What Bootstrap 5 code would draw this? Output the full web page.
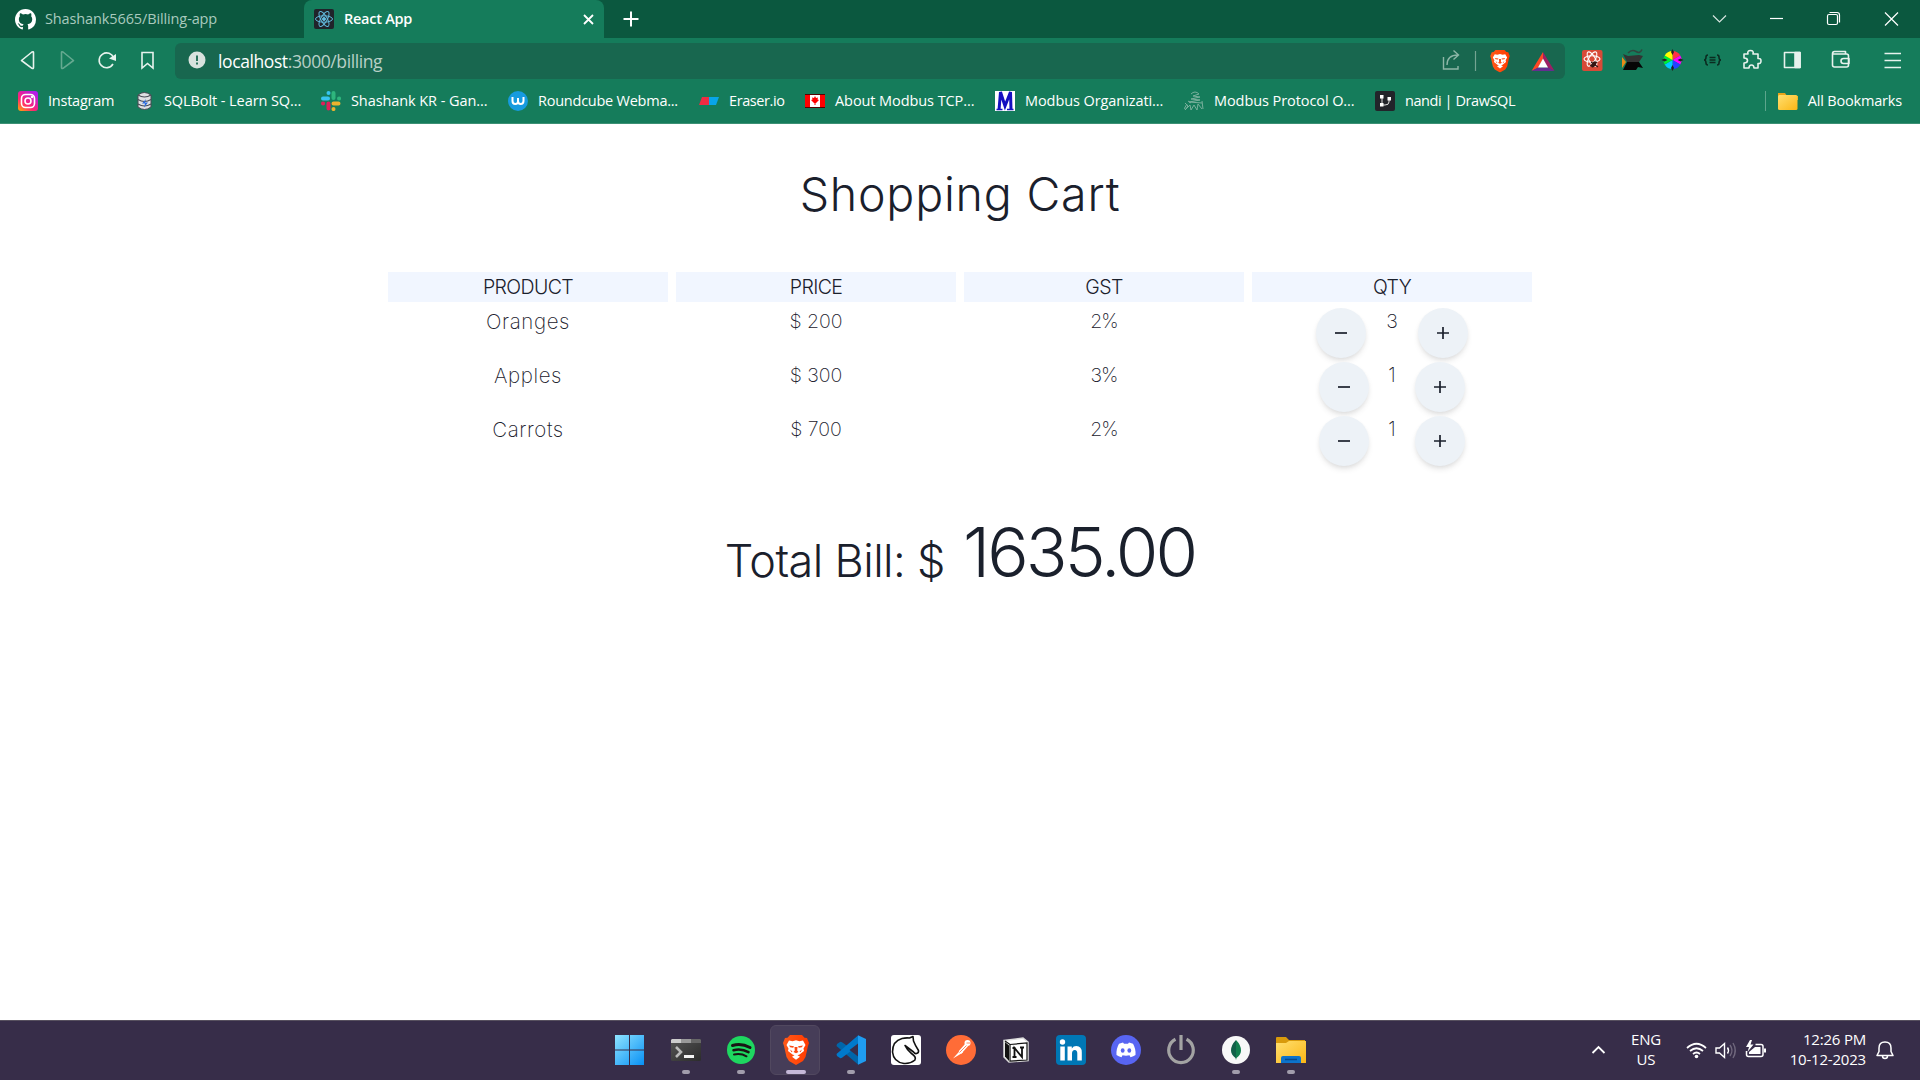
<!DOCTYPE html>
<html lang="en"><head><meta charset="utf-8"><title>React App</title>
<link href="https://cdn.jsdelivr.net/npm/bootstrap@5.3.0/dist/css/bootstrap.min.css" rel="stylesheet">
<style>
html,body{height:100%;overflow:hidden}
body{font-family:"Open Sans","Noto Sans",sans-serif;color:#1a202c;background:#fff}
svg{display:block;flex:none}
.screen{width:1920px;height:1080px}
.tabstrip{height:38px;background:#0b583f;color:#fff}
.tab-idle{width:304px;padding-left:15px;color:#a9cabe;gap:9px;letter-spacing:-.12px}
.tab-live{width:300px;background:#157c5b;border-radius:8px 8px 0 0;padding:0 10px}
.tab-name{margin-left:10px;letter-spacing:-.25px}
.t15{font-size:14.5px;line-height:20px;white-space:nowrap}
.toolbar{height:48px;background:#157c5b}
.omni{width:1390px;height:36px;background:#18674f;border-radius:6px;margin-top:5px;padding-left:13px}
.addr{font-size:17.5px;line-height:20px;margin:0 0 1px 12px;color:#b9d0c7;letter-spacing:-.4px}
.marks{height:38px;background:#157c5b;border-bottom:1px solid #3c9074;color:#fff;padding:0 18px 8px;letter-spacing:-.08px}
.marks .snug{letter-spacing:-.42px}
.marks .snug-some{letter-spacing:-.24px}
.bm{gap:10px}
.page-area{font-family:Inter,Lato,sans-serif;font-weight:300}
.title{font-size:46.5px;line-height:54px;font-weight:300;margin:43px 0 51px;letter-spacing:.8px}
.cart{width:1144px;display:grid;grid-template-columns:repeat(4,280px);gap:0 8px}
.hd{height:30px;line-height:30px;background:#f1f6ff;font-size:19.5px;font-weight:350;letter-spacing:-.6px}
.cell{height:54px;padding-top:6px;font-size:19.5px;line-height:27px;font-weight:200}
.nm{font-size:20.5px;letter-spacing:.6px}
.pct{letter-spacing:-1px}
.rnd{width:50px;height:50px;border-radius:50%;background:#edf2f7;box-shadow:0 4px 6px -1px rgba(0,0,0,.1),0 2px 4px -1px rgba(0,0,0,.06);border:0;padding:0 0 1px;display:flex;align-items:center;justify-content:center}
.qn{width:52px}
.qn1{width:46px}
.total{margin-top:43px;height:90px;line-height:90px}
.lbl{font-size:45px;letter-spacing:-.6px}
.sum{font-size:69px;letter-spacing:-2.9px;margin-left:18px}
.taskbar{height:60px;background:#372d49;border-top:1px solid #57505f;color:#fff}
.apps{padding-left:602px}
.app{width:55px;height:58px;position:relative;display:flex;align-items:center;justify-content:center}
.app-start{width:56px;padding-right:1px}
.app.run::after{content:"";position:absolute;bottom:5px;width:8px;height:4px;border-radius:2px;background:#a29dac}
.app.act::after{width:20px;background:#c5b8d8}
.app.act::before{content:"";position:absolute;left:2px;top:4px;width:50px;height:50px;border-radius:6px;background:#463d58;border:1px solid #51485f}
.app svg{position:relative}
.tray{font-size:15px;line-height:20px;padding:0 24px 3px 0}
.lang{width:60px;letter-spacing:-.2px}
.clock{width:80px;letter-spacing:-.2px;white-space:nowrap}
</style></head><body>
<svg width="0" height="0" class="position-absolute"><defs>
<linearGradient id="ig" x1="0" y1="1" x2=".8" y2="0"><stop offset="0" stop-color="#ffb000"/><stop offset=".4" stop-color="#ff2670"/><stop offset="1" stop-color="#b01cf0"/></linearGradient>
<linearGradient id="wn" x1="0" y1="0" x2="29" y2="30" gradientUnits="userSpaceOnUse"><stop offset="0" stop-color="#8fe4ff"/><stop offset="1" stop-color="#0890f4"/></linearGradient>
<linearGradient id="fo" x1="0" y1="0" x2="1" y2="1"><stop offset="0" stop-color="#ffdf70"/><stop offset="1" stop-color="#fbb615"/></linearGradient>
<linearGradient id="br" x1="0" y1="0" x2="1" y2="0"><stop offset="0" stop-color="#ff5a1a"/><stop offset="1" stop-color="#ff3a00"/></linearGradient>
<linearGradient id="tm" x1="0" y1="0" x2="1" y2="1"><stop offset="0" stop-color="#555"/><stop offset="1" stop-color="#2c2c2c"/></linearGradient>
<symbol id="brave" viewBox="0 0 26 30"><g stroke="none"><path fill="url(#br)" d="M7 0h12l2.500 2.800L24 3l2 5-1 3-2.500 11-2.500 4-7 4-7-4-2.500-4L1 11 0 8l2-5 2.500-.2z"/><path fill="#fff" d="M6 5.500l3.500.7 3.500-1 3.500 1 3.500-.7L22.500 10l-2 3.500.5 2.500-4.500 3.500-2 .7 2.500 1.600-4 3-4-3 2.500-1.600-2-.7L5 16l.5-2.500-2-3.500z"/><g fill="#fb4a14"><path d="M6 10.500l5 .8-.8 1.500-3-.6zM20 10.500l-5 .8.800 1.500 3-.6zM11.500 12h3l-.3 3.500 1.300 1.500L13 18.200 10.500 17l1.300-1.500zM7 14.500l2.500 2-1 .8zM19 14.500l-2.500 2 1 .8z"/></g></g></symbol>
</defs></svg>
<div class="screen d-flex flex-column">
<header>
<div class="tabstrip d-flex align-items-stretch">
 <div class="tab-idle d-flex align-items-center">
  <svg width="21" height="21" viewBox="0 0 16 16" fill="#fff"><path d="M8 0C3.58 0 0 3.58 0 8c0 3.54 2.29 6.53 5.47 7.59.4.07.55-.17.55-.38v-1.49c-2.01.37-2.53-.49-2.69-.94-.09-.23-.48-.94-.82-1.13-.28-.15-.68-.52-.01-.53.63-.01 1.08.58 1.23.82.72 1.21 1.87.87 2.33.66.07-.52.28-.87.51-1.07-1.78-.2-3.64-.89-3.64-3.95 0-.87.31-1.59.82-2.15-.08-.2-.36-1.02.08-2.12 0 0 .67-.21 2.2.82a7.6 7.6 0 0 1 4 0c1.53-1.04 2.2-.82 2.2-.82.44 1.1.16 1.92.08 2.12.51.56.82 1.27.82 2.15 0 3.07-1.87 3.75-3.65 3.95.29.25.54.73.54 1.48v2.2c0 .21.15.46.55.38A8 8 0 0 0 16 8c0-4.42-3.58-8-8-8z"/></svg>
  <span class="t15">Shashank5665/Billing-app</span></div>
 <div class="tab-live d-flex align-items-center">
  <svg width="20" height="20" viewBox="0 0 20 20" fill="none" stroke="#61b9dc"><rect width="20" height="20" rx="2" fill="#20232a" stroke="none"/><ellipse cx="10" cy="10" rx="8.5" ry="3.2"/><ellipse cx="10" cy="10" rx="8.5" ry="3.2" transform="rotate(60 10 10)"/><ellipse cx="10" cy="10" rx="8.5" ry="3.2" transform="rotate(120 10 10)"/><circle cx="10" cy="10" r="1.5" fill="#61b9dc"/></svg>
  <span class="t15 fw-semibold tab-name">React App</span>
  <svg class="ms-auto" width="11" height="11" viewBox="0 0 11 11" stroke="#fff" stroke-width="1.8"><path d="M1 1l9 9M10 1l-9 9"/></svg></div>
 <svg width="54" height="38" stroke="#fff" stroke-width="2"><path d="M19.5 19h15M27 11.500v15"/></svg>
 <svg class="ms-auto" width="220" height="38" fill="none" stroke="#d7e5df" stroke-width="1.2"><path d="M13 15.500l6.500 6.500 6.500-6.500"/><path stroke="#fff" d="M70 18.500h13"/><path stroke="#fff" d="M185 12.500l13 13M198 12.500l-13 13"/><g stroke="#fff"><rect x="127.500" y="14.500" width="10" height="10" rx="1.500"/><path d="M129.500 12.500h7.500q2.500 0 2.500 2.500v7.500"/></g></svg>
</div>
<div class="toolbar d-flex">
 <svg width="175" height="48" fill="none" stroke="#e7f2ed" stroke-width="1.6" stroke-linejoin="round"><path d="M33.500 14.500v15q0 1.500-1.500.8L21.500 22.500l10.500-8.500q1.500-.8 1.500.5z"/><path stroke="#65a990" d="M61.500 14.500v15q0 1.500 1.500.8l10.500-7.800-10.500-8.500q-1.500-.8-1.500.5z"/><path d="M113.600 20a7.400 7.400 0 1 0-.6 6"/><path fill="#e7f2ed" stroke="none" d="M109 20.500l7-4.500v7z"/><path stroke-linejoin="miter" d="M142 14.500h11v15.500l-5.500-4.500-5.500 4.500z"/></svg>
 <div class="omni d-flex align-items-center">
  <svg width="18" height="20"><circle cx="9" cy="9" r="8.500" fill="#d8e2de"/><path d="M9 4.500v5.500M9 11.500v2" stroke="#18674f" stroke-width="1.800"/></svg>
  <span class="addr"><span class="text-white">localhost</span>:3000/billing</span>
  <svg class="ms-auto" width="135" height="36" fill="none" stroke="#8db6a7" stroke-width="1.400"><path d="M13.500 14v12h14.500v-3M17 22q0-10 11-10M23.500 7.500l5 4.500-5 4.500"/><path stroke="#74a492" stroke-width="1.200" d="M45.500 8v20"/><use href="#brave" x="60" y="7" width="20" height="22.500"/><g stroke="none"><path fill="#ff4724" d="M113 9L101.500 28l6.500-3 5-9z"/><path fill="#9e1f63" d="M113 9l11.500 19-6.500-3-5-9z"/><path fill="#662d91" d="M101.500 28h23l-6.500-3.500h-10z"/><path fill="#fff" d="M113 15.500l5 9h-10z"/></g></svg>
 </div>
 <svg width="355" height="48" viewBox="0 1 355 48" fill="none">
  <g transform="translate(17 13)"><rect width="20.500" height="21" rx="2" fill="#d84a38"/><g stroke="#fff" stroke-width="1.100"><ellipse cx="10" cy="9" rx="8" ry="3.200"/><ellipse cx="10" cy="9" rx="8" ry="3.200" transform="rotate(60 10 9)"/><ellipse cx="10" cy="9" rx="8" ry="3.200" transform="rotate(120 10 9)"/></g><path stroke="#321513" stroke-width="1.200" d="M9 12l7 5M8 16l7-4"/><ellipse cx="12" cy="14.500" rx="2" ry="3.500" fill="#321513" transform="rotate(35 12 14)"/></g>
  <g transform="translate(57 12)"><path d="M6 4q4-4 8-1.500t6-2" stroke="#30463f" stroke-width="1.500"/><path fill="#333" d="M1 5l5 2 11-1 4 1-4 6H5z"/><path fill="#e98b18" d="M0 8l4 5-4 6z"/><path fill="#060606" d="M5 13h12l4 6-5-1-2 3H1z"/></g>
  <g transform="translate(107.500 23)"><path fill="#f34" d="M0 0V-9A9 9 0 0 1 7.800-4.500z"/><path fill="#f0f" d="M0 0L7.800-4.500A9 9 0 0 1 7.800 4.500z"/><path fill="#24f" d="M0 0L7.800 4.500A9 9 0 0 1 0 9z"/><path fill="#0cf" d="M0 0V9A9 9 0 0 1-7.800 4.500z"/><path fill="#0e3" d="M0 0L-7.800 4.500A9 9 0 0 1-7.800-4.500z"/><path fill="#ff0" d="M0 0L-7.800-4.500A9 9 0 0 1 0-9z"/><g fill="#222"><path d="M0-5l-1.500-3L0-11l1.500 3zM0 5l-1.500 3L0 11l1.500-3zM-5 0l-3-1.500L-11 0l3 1.500zM5 0l3-1.500L11 0l-3 1.500z"/></g></g>
  <g transform="translate(147.500 23)" stroke="#0b2c21" stroke-width="1.600"><path d="M-4.500-5q-2 0-2 2 0 3-2 3 2 0 2 3 0 2 2 2M4.500-5q2 0 2 2 0 3 2 3-2 0-2 3 0 2-2 2M-3-2.500h6M-3 0h6M-3 2.500h6"/></g>
  <g stroke="#e7f2ed" stroke-width="1.600" stroke-linejoin="round"><path d="M179 17h4q-1-3.500 2.500-3.500T188 17h5v4.500q3-.5 3 2.500t-3 2.500V31h-4q0-3-2.500-3t-2.500 3h-5v-5q3.500 0 3.500-2.500T179 21z"/><rect x="219.500" y="15.500" width="15.500" height="15"/><path fill="#e7f2ed" d="M230 15.500h5v15h-5z"/><path d="M267.500 17v11q0 2 2 2h12q2 0 2-2v-9q0-2-2-2h-14q0-2.500 2-2.500h11v2.500M284 21.500h-5.500q-2.500 0-2.500 2.500t2.500 2.500h5.500z"/><path stroke-width="1.300" d="M319.500 16.500H336M319.500 23.500H336M319.500 30.500H336"/></g>
 </svg>
</div>
<nav class="marks d-flex align-items-center t15">
 <div class="bm d-flex align-items-center" style="width:116px"><svg width="20" height="20" fill="none" stroke="#fff" stroke-width="1.600"><rect width="20" height="20" rx="3" fill="url(#ig)" stroke="none"/><rect x="3.500" y="3.500" width="13" height="13" rx="4"/><circle cx="10" cy="10" r="3"/><circle cx="14" cy="6" r=".5"/></svg><span class="snug-some">Instagram</span></div>
 <div class="bm d-flex align-items-center" style="width:187px"><svg width="20" height="20"><path fill="#dfe0e2" stroke="#484b55" d="M4 4q6-5 13 0v12q-6.500 5-13 0z"/><path fill="none" stroke="#484b55" stroke-width="1.100" d="M4 4q6.500 4 13 0M4 8.500q6.500 4 13 0M4 13q6.500 4 13 0"/><path fill="#276ae0" d="M12 8l-4 4.500h3l-1 4 4-5h-3z"/></svg><span>SQLBolt - Learn SQ...</span></div>
 <div class="bm d-flex align-items-center" style="width:187px"><svg width="20" height="20" stroke-width="4" stroke-linecap="round"><path stroke="#36c5f0" d="M2 7.500h5M7.500 2v.1"/><path stroke="#2eb67d" d="M12.500 2v5M18 7.500h.1"/><path stroke="#ecb22e" d="M12.500 12.500h5M12.500 18v.1"/><path stroke="#e01e5a" d="M7.500 12.500v5M2 12.500h.1"/></svg><span>Shashank KR - Gan...</span></div>
 <div class="bm d-flex align-items-center" style="width:191px"><svg width="20" height="20"><circle cx="10" cy="10" r="10" fill="#169bdf"/><path d="M4.500 6v4q0 3 2.800 3T10 10V7v3q0 3 2.700 3t2.800-3V6" fill="none" stroke="#fff" stroke-width="2"/></svg><span class="snug-some">Roundcube Webma...</span></div>
 <div class="bm d-flex align-items-center" style="width:106px"><svg width="20" height="20"><path fill="#ef2b43" d="M3 6h7v8H0z"/><path fill="#08a5e9" d="M10 6h10l-3 8h-7z"/></svg><span class="snug">Eraser.io</span></div>
 <div class="bm d-flex align-items-center" style="width:190px"><svg width="20" height="20"><rect y="3.500" width="20" height="13" fill="#fff" stroke="#500"/><path fill="#f00" d="M0 4h5v12H0zM15 4h5v12h-5zM10 5l1 2 2-.5-.5 2 1.500.5-3 3h-.5v2h-1v-2H9l-3-3 1.500-.5-.5-2L9 7z"/></svg><span>About Modbus TCP...</span></div>
 <div class="bm d-flex align-items-center" style="width:189px"><svg width="20" height="20"><path fill="#fff" d="M0 0h20v20H0z"/><path d="M1.500 18.500h6M12 18.500h6.500" stroke="#1410c0" stroke-width="1.500"/><path d="M4 19L5.500 1 10 15 15.500 1l.5 18" fill="none" stroke="#1410c0" stroke-width="3"/></svg><span>Modbus Organizati...</span></div>
 <div class="bm d-flex align-items-center" style="width:191px"><svg width="20" height="20" fill="none" stroke="#78b09c" stroke-width="1"><path d="M7 3q4-4 8 0l-6 2 7 1-9 2 9 1-11 2 13 1M1 12l3 3-3 4 5-5 1 5 3-5 3 5 1-6 4 5M4 10l3 2M18 10l1 8M0 18l3-5"/></svg><span>Modbus Protocol O...</span></div>
 <div class="bm d-flex align-items-center"><svg width="20" height="20"><rect width="20" height="20" rx="2" fill="#22242a"/><path d="M7 6v8h3M14 8v3q0 3-4 3" fill="none" stroke="#ddd"/><path fill="#fff" d="M5 4h3.500v3.500H5zM5 12h3.500v3.500H5zM12.500 6H16v3.500h-3.500z"/></svg><span class="snug">nandi | DrawSQL</span></div>
 <div class="d-flex align-items-center ms-auto"><svg width="43" height="20"><path d="M.5 0v20" stroke="#5da58c"/><path fill="#e9a419" d="M13 2h7l2 3h11v4H13z"/><rect x="13" y="4" width="19.500" height="15" rx="1.500" fill="url(#fo)"/></svg><span style="letter-spacing:-.18px">All Bookmarks</span></div>
</nav>
</header>
<main class="page-area flex-grow-1 d-flex flex-column align-items-center text-center">
 <h1 class="title">Shopping Cart</h1>
 <section class="cart">
  <div class="hd">PRODUCT</div><div class="hd">PRICE</div><div class="hd">GST</div><div class="hd">QTY</div>
  <div class="cell nm">Oranges</div><div class="cell">$ 200</div><div class="cell pct">2%</div>
  <div class="cell d-flex justify-content-center"><button class="rnd"><svg width="12" height="12" stroke="#1a202c" stroke-width="1.700"><path d="M0 6h12"/></svg></button><span class="qn">3</span><button class="rnd"><svg width="12" height="12" stroke="#1a202c" stroke-width="1.700"><path d="M0 6h12M6 0v12"/></svg></button></div>
  <div class="cell nm">Apples</div><div class="cell">$ 300</div><div class="cell pct">3%</div>
  <div class="cell d-flex justify-content-center"><button class="rnd"><svg width="12" height="12" stroke="#1a202c" stroke-width="1.700"><path d="M0 6h12"/></svg></button><span class="qn1">1</span><button class="rnd"><svg width="12" height="12" stroke="#1a202c" stroke-width="1.700"><path d="M0 6h12M6 0v12"/></svg></button></div>
  <div class="cell nm">Carrots</div><div class="cell">$ 700</div><div class="cell pct">2%</div>
  <div class="cell d-flex justify-content-center"><button class="rnd"><svg width="12" height="12" stroke="#1a202c" stroke-width="1.700"><path d="M0 6h12"/></svg></button><span class="qn1">1</span><button class="rnd"><svg width="12" height="12" stroke="#1a202c" stroke-width="1.700"><path d="M0 6h12M6 0v12"/></svg></button></div>
 </section>
 <div class="total d-flex align-items-baseline"><span class="lbl">Total Bill: $</span><span class="sum">1635.00</span></div>
</main>
<footer class="taskbar d-flex justify-content-between">
 <div class="apps d-flex">
 <div class="app app-start"><svg width="29" height="30"><path fill="url(#wn)" d="M0 0h14v14.500H0zM15 0h14v14.500H15zM0 15.500h14V30H0zM15 15.500h14V30H15z"/></svg></div>
 <div class="app run"><svg width="30" height="22"><rect width="30" height="22" rx="1.500" fill="url(#tm)"/><path fill="#ccc" d="M1 0h9v4H0V1z"/><path fill="#999" d="M10 0h10v4H10z"/><path fill="#666" d="M20 0h9l1 1v3H20z"/><path d="M5 8l5 5-5 5" fill="none" stroke="#bbb" stroke-width="2.600"/><path d="M13 17.500h10" stroke="#f4f4f4" stroke-width="3"/></svg></div>
 <div class="app run"><svg width="28" height="28" fill="none" stroke="#191414" stroke-linecap="round"><circle cx="14" cy="14" r="14" fill="#1ed760" stroke="none"/><path stroke-width="3" d="M5.500 9.500q9-2.500 17.500 2"/><path stroke-width="2.500" d="M6.500 14.200q8-2 15 2"/><path stroke-width="2" d="M7 18.500q7-1.500 12.500 1.800"/></svg></div>
 <div class="app run act"><svg width="26" height="30"><use href="#brave" width="26" height="30"/></svg></div>
 <div class="app run"><svg width="30" height="30"><path fill="#0065a9" d="M1 9l3-2q1-.5 2 .3L30 24l-8 5.500L.5 11z"/><path fill="#007acc" d="M1 21l3 2q1 .5 2-.3L28 6l-6-5.500L.5 19z"/><path fill="#1f9cf0" d="M22 .3L30 4v22l-8 3.700V.3z"/><path fill="#372d49" d="M22 8.500v13L13.500 15z"/></svg></div>
 <div class="app"><svg width="30" height="30" fill="none" stroke="#111" stroke-width="1.600" stroke-linejoin="round" stroke-linecap="round"><rect width="30" height="30" rx="3" fill="#fff" stroke="none"/><path d="M24 25q-5 4-11 3.500Q2.500 27 1.500 17 1.500 6 11 3.500q4-1 7.500-.5L22 1.500l.5 4.500q1.500 4 5 9.500.5 2.500-2 3-1.500.5-3-1.500L14 10.500q2 4.500 6.500 8 5 3.500 3.500 6"/></svg></div>
 <div class="app"><svg width="30" height="30"><circle cx="15" cy="15" r="15" fill="#ff6c37"/><path d="M7 23.500l7.500-8.500 2.500 2.500z" fill="#fff"/><path d="M14 17.500l7-8" stroke="#fff" stroke-width="3.500"/><circle cx="21.500" cy="8" r="3" fill="#fff"/><path d="M13.500 17.500l7-7M20.500 8h3.500" stroke="#ff6c37" stroke-width=".8"/></svg></div>
 <div class="app"><svg width="26" height="26"><path fill="#fff" stroke="#ddd" stroke-width="1.500" d="M1 3.500L20 1l5 4v18.500L6 25l-5-5z"/><path fill="#111" d="M2 5l4 3.500V24l-4-4.500z"/><path fill="none" stroke="#111" stroke-width="1.200" d="M2 4l5 3.500 17-1.500v17L7 24V7.500"/><path fill="none" stroke="#111" stroke-width="1.800" d="M11.500 20v-9l7.500 9v-9.500M9.500 11h3M17 10.500h4M9.500 20h4"/></svg></div>
 <div class="app"><svg width="30" height="30"><rect width="30" height="30" rx="4" fill="#0077b5"/><circle cx="6.500" cy="7" r="2.700" fill="#fff"/><path fill="#fff" d="M4.300 11.500h4.500v14H4.300zM11.500 11.500h4.300v2q1.500-2.400 4.500-2.400 5.500 0 5.500 6.500v7.900h-4.500v-7q0-3.500-2.500-3.500-2.800 0-2.800 3.500v7h-4.500z"/></svg></div>
 <div class="app"><svg width="30" height="30"><circle cx="15" cy="15" r="15" fill="#5865f2"/><path fill="#fff" d="M12 7.500l1 1.300q2-.3 4 0l1-1.300 4 1.300q3 5.200 2.500 11.200-2 1.600-5 2.300l-1-2q-3.500.8-7 0l-1 2q-3-.7-5-2.300Q5 14 8 8.800z"/><ellipse cx="11.700" cy="15.500" rx="1.900" ry="2.200" fill="#5865f2"/><ellipse cx="18.300" cy="15.500" rx="1.900" ry="2.200" fill="#5865f2"/></svg></div>
 <div class="app"><svg width="30" height="30" fill="none" stroke="#a3a3a3" stroke-width="3.200"><path d="M9.500 4.300a12.300 12.300 0 1 0 11 0M15 0v15"/></svg></div>
 <div class="app run"><svg width="28" height="28"><circle cx="14" cy="14" r="14" fill="#f8f8f8"/><path fill="#116149" d="M14 4q-5 5-5 10.500 0 4 4.500 7.500l.5 2z"/><path fill="#12804f" d="M14 4q5 5 5 10.500 0 4-4.500 7.500l-.5 2z"/></svg></div>
 <div class="app run"><svg width="30" height="28"><path fill="#d89a0c" d="M0 2q0-1 1-1h9l3 3h16v8H0z"/><path fill="url(#fo)" d="M0 7h10l3-2h17v22H0z"/><path fill="#0d73cb" d="M5 27v-5q0-2 2-2h16q2 0 2 2v5z"/><path d="M9 23.500h12" stroke="#064a8d" stroke-width="1.500"/></svg></div>
 </div>
 <div class="tray d-flex align-items-center">
  <svg width="26" height="20" fill="none" stroke="#fff" stroke-width="1.800"><path d="M6.500 14l6-6 6 6"/></svg>
  <div class="lang text-center ms-1">ENG<br>US</div>
  <svg width="106" height="26" viewBox="0 -1 106 26" fill="none" stroke="#fff" stroke-width="1.700" class="ms-1"><g transform="translate(3 0)"><path d="M4 11q9.500-8.500 19 0M7 14q6.500-5.500 13 0M10 17q3.500-3 7 0"/><circle cx="13.500" cy="19.500" r="1.800" fill="#fff" stroke="none"/></g><path stroke-width="1.400" d="M36 11h3.500l5-4.500v14l-5-4.500H36zM47.500 10.500q2 3 0 6"/><path stroke="#70687d" stroke-width="1.400" d="M50 8q4 5.500 0 11M53 6q4.500 7.500 0 15"/><path stroke-width="1.500" d="M75.500 7.500H81q2 0 2 2v8q0 2-2 2H68.500q-2 0-2-2V14"/><path fill="#fff" stroke="none" d="M75 10h5.500v7H69v-2zM84 11.500h2v4h-2zM70 3l-4 7h3l-1.500 5 6-7.500h-3L72 3z"/></svg>
  <div class="clock text-end">12:26 PM<br>10-12-2023</div>
  <svg class="ms-2" width="22" height="22" viewBox="0 -1 22 22" fill="none" stroke="#fff" stroke-width="1.500" stroke-linejoin="round"><path d="M3 16.500l2-4V9q0-6 6-6t6 6v3.500l2 4zM8.500 17q0 2.500 2.500 2.500t2.500-2.500"/></svg>
 </div>
</footer>
</div>
<script src="https://cdn.jsdelivr.net/npm/bootstrap@5.3.0/dist/js/bootstrap.bundle.min.js"></script>
</body></html>
